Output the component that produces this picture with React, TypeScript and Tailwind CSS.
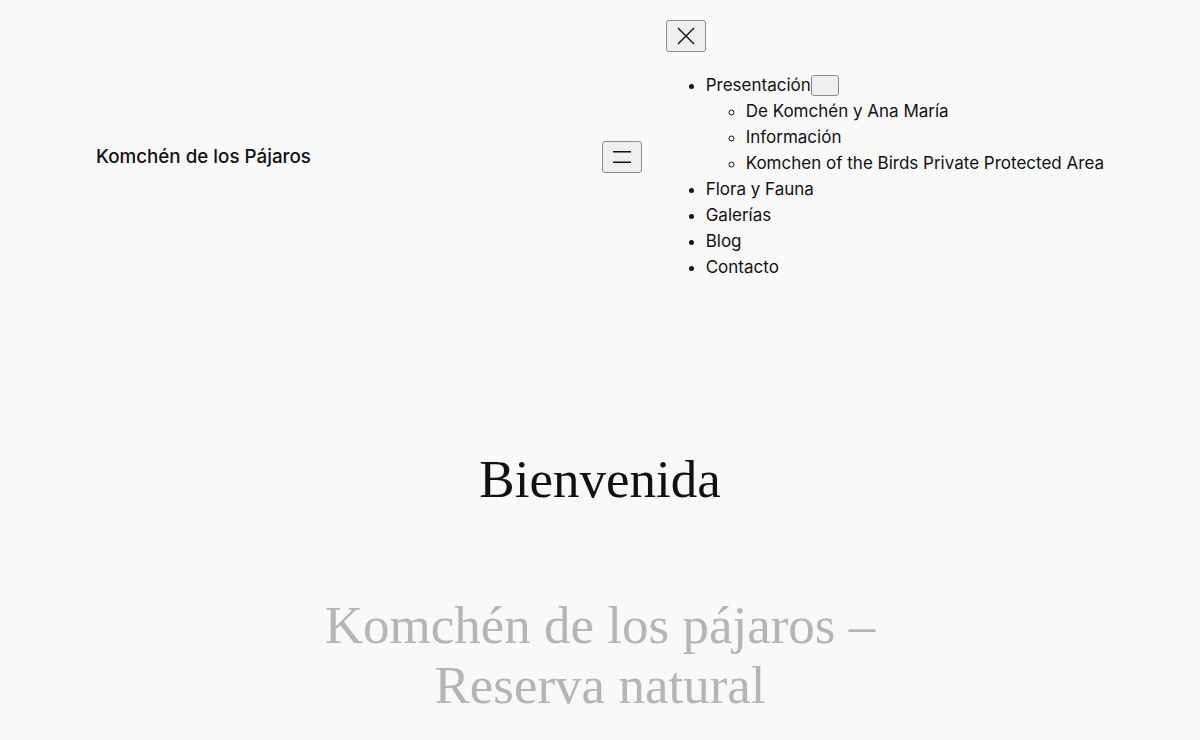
import React from 'react';

const navItems = [
  {
    label: 'Presentación',
    children: ['De Komchén y Ana María', 'Información', 'Komchen of the Birds Private Protected Area'],
  },
  { label: 'Flora y Fauna' },
  { label: 'Galerías' },
  { label: 'Blog' },
  { label: 'Contacto' },
];

const btn =
  'flex items-center justify-center bg-[#efefef] border border-[#8a8a8a] rounded-[3px] text-[#111]';

export default function App() {
  return (
    <div className="min-h-screen bg-[#f9f9f9] text-[#111] font-['Inter','Noto_Sans',sans-serif]">
      {/* Header */}
      <header className="flex items-center px-[96px] h-[314px]">
        <div className="flex-1 text-[18.8px] font-medium leading-[26px]">Komchén de los Pájaros</div>

        <button className={`${btn} w-[40px] h-[32px]`} aria-label="Abrir menú">
          <svg width="18" height="12" viewBox="0 0 18 12" fill="none" stroke="#111" strokeWidth="1.4">
            <path d="M0 0.8h18M0 11.2h18" />
          </svg>
        </button>

        {/* Menu */}
        <nav className="ml-6 pt-[20px] pb-[34px] text-[17px] leading-[26px]">
          <button className={`${btn} w-[40px] h-[32px]`} aria-label="Cerrar menú">
            <svg width="18" height="18" viewBox="0 0 18 18" fill="none" stroke="#111" strokeWidth="1.4">
              <path d="M1 1l16 16M17 1L1 17" />
            </svg>
          </button>
          <ul className="mt-[20px] pl-10 list-disc">
            {navItems.map((item) => (
              <li key={item.label}>
                <span className="inline-flex items-center">
                  {item.label}
                  {item.children && <button className={`${btn} w-[28px] h-[21px]`} aria-label="Submenú" />}
                </span>
                {item.children && (
                  <ul className="pl-10 list-[circle]">
                    {item.children.map((c) => (
                      <li key={c}>{c}</li>
                    ))}
                  </ul>
                )}
              </li>
            ))}
          </ul>
        </nav>
      </header>

      {/* Main */}
      <main className="font-['Liberation_Serif','Times_New_Roman',serif] text-center">
        <h1 className="mt-[133px] text-[53px] leading-[64px] text-[#111]">Bienvenida</h1>
        <h2 className="mt-[84px] mx-auto max-w-[600px] text-[53px] leading-[60px] text-[#b5b5b5]">
          Komchén de los pájaros – Reserva natural
        </h2>
      </main>
    </div>
  );
}
